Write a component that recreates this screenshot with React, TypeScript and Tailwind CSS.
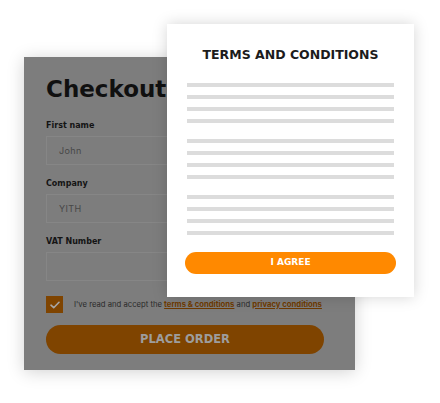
import React from 'react';

const body = { fontFamily: 'Inter, "DejaVu Sans", sans-serif' };
const heading = { fontFamily: '"DejaVu Sans", Inter, sans-serif' };

function Field({ label, value }: { label: string; value?: string }) {
  return (
    <div className="flex flex-col">
      <span className="text-[8px] font-bold text-[#141414] leading-none" style={heading}>{label}</span>
      <div className="mt-[6px] h-[29px] w-[278px] border border-[#868686] flex items-center pl-[12px] text-[9px] tracking-[0.04em] text-[#474747]">
        {value}
      </div>
    </div>
  );
}

export default function App() {
  const groups = [0, 1, 2];
  return (
    <div className="relative w-[440px] h-[403px] bg-white overflow-hidden" style={body}>
      {/* Checkout form behind the overlay */}
      <div className="ml-[24px] mt-[57px] w-[331px] h-[313px] bg-[#7d7d7d] shadow-[0_2px_16px_rgba(0,0,0,0.18)] pl-[22px] pt-[21px]">
        <h1 className="text-[23px] font-bold text-[#101010] leading-none" style={heading}>Checkout</h1>
        <div className="mt-[21px] flex flex-col gap-[15px]">
          <Field label="First name" value="John" />
          <Field label="Company" value="YITH" />
          <Field label="VAT Number" />
        </div>
        <div className="mt-[15px] flex items-center">
          <div className="w-[17px] h-[17px] bg-[#7f4400] flex items-center justify-center">
            <svg width="10" height="8" viewBox="0 0 10 8" fill="none">
              <path d="M1 4.2 L3.7 6.7 L9 1.3" stroke="#a8a8a8" strokeWidth="1.6" strokeLinecap="round" strokeLinejoin="round" />
            </svg>
          </div>
          <p className="ml-[11px] text-[7.7px] text-[#2a2a2a] whitespace-nowrap">
            I've read and accept the{' '}
            <span className="font-bold text-[#6e3a00] underline">terms &amp; conditions</span> and{' '}
            <span className="font-bold text-[#6e3a00] underline">privacy conditions</span>
          </p>
        </div>
        <button
          className="mt-[12px] w-[278px] h-[29px] rounded-full bg-[#7f4400] text-[#9d9d9d] text-[11.5px] font-bold"
          style={heading}
        >
          PLACE ORDER
        </button>
      </div>

      {/* Terms modal on top */}
      <div className="absolute left-[167px] top-[24px] w-[247px] h-[273px] bg-white shadow-[0_0_14px_rgba(0,0,0,0.17)] px-[18px] pt-[25px] flex flex-col">
        <h2 className="text-center text-[12.5px] font-bold text-[#1c1c1c] leading-none" style={heading}>
          TERMS AND CONDITIONS
        </h2>
        <div className="mt-[21px] flex flex-col gap-[16px] px-[2px]">
          {groups.map((g) => (
            <div key={g} className="flex flex-col gap-[8px]">
              {[0, 1, 2, 3].map((i) => (
                <div key={i} className="h-[4px] w-full bg-[#dcdcdc]" />
              ))}
            </div>
          ))}
        </div>
        <button
          className="mt-[17px] h-[22px] w-full rounded-full bg-[#ff8900] text-white text-[9px] font-bold"
          style={heading}
        >
          I AGREE
        </button>
      </div>
    </div>
  );
}
